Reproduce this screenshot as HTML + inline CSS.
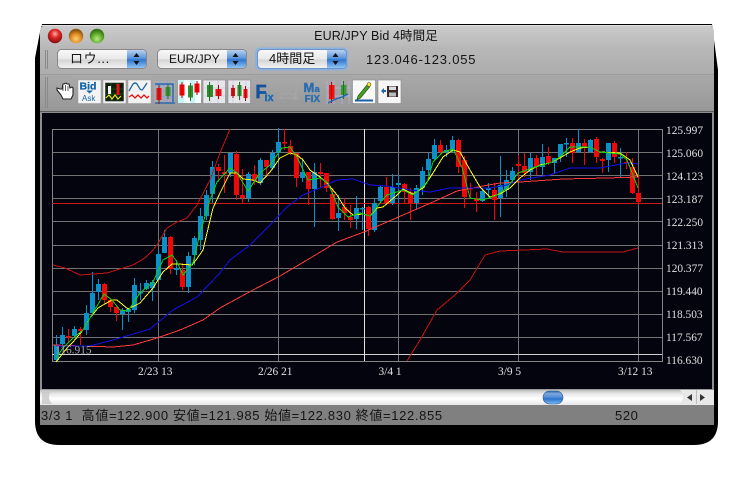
<!DOCTYPE html>
<html><head><meta charset="utf-8"><style>
html,body{margin:0;padding:0;background:#fff;width:754px;height:480px;overflow:hidden}
svg{position:absolute;left:0;top:0}
.t{font-family:"Liberation Sans","Noto Sans CJK JP",sans-serif;fill:#141414}
.s{font-family:"Liberation Serif",serif;font-size:11.4px;fill:#e0e0e0}
.b{font-family:"Liberation Sans",sans-serif;font-weight:bold}
</style></head><body>
<svg width="754" height="480" viewBox="0 0 754 480" xmlns="http://www.w3.org/2000/svg">
<defs>
<linearGradient id="win" x1="0" y1="0" x2="0" y2="1"><stop offset="0" stop-color="#cbcbcb"/><stop offset=".22" stop-color="#bcbcbc"/><stop offset=".25" stop-color="#b8b8b8"/><stop offset=".57" stop-color="#adadad"/><stop offset=".58" stop-color="#a9a9a9"/><stop offset="1" stop-color="#979797"/></linearGradient>
<linearGradient id="pop" x1="0" y1="0" x2="0" y2="1"><stop offset="0" stop-color="#fafafa"/><stop offset=".5" stop-color="#e8e8e8"/><stop offset=".55" stop-color="#d4d4d4"/><stop offset="1" stop-color="#f4f4f4"/></linearGradient>
<linearGradient id="blu" x1="0" y1="0" x2="0" y2="1"><stop offset="0" stop-color="#b8d0f0"/><stop offset=".45" stop-color="#5d97dc"/><stop offset=".55" stop-color="#2f74cf"/><stop offset="1" stop-color="#8fc4f4"/></linearGradient>
<linearGradient id="trk" x1="0" y1="0" x2="0" y2="1"><stop offset="0" stop-color="#b4b4b4"/><stop offset=".3" stop-color="#e8e8e8"/><stop offset=".6" stop-color="#ffffff"/><stop offset="1" stop-color="#e6e6e6"/></linearGradient>
<linearGradient id="thb" x1="0" y1="0" x2="0" y2="1"><stop offset="0" stop-color="#2a5fa8"/><stop offset=".2" stop-color="#7fa8dc"/><stop offset=".5" stop-color="#4f8ad6"/><stop offset=".6" stop-color="#2a72cc"/><stop offset="1" stop-color="#7fbaf0"/></linearGradient>
<radialGradient id="rd" cx=".5" cy=".35" r=".6"><stop offset="0" stop-color="#ffb0a8"/><stop offset=".45" stop-color="#e02a28"/><stop offset="1" stop-color="#8c1010"/></radialGradient>
<radialGradient id="yl" cx=".5" cy=".7" r=".6"><stop offset="0" stop-color="#ffd078"/><stop offset=".6" stop-color="#e08a20"/><stop offset="1" stop-color="#8c5810"/></radialGradient>
<radialGradient id="gn" cx=".5" cy=".7" r=".6"><stop offset="0" stop-color="#b8e888"/><stop offset=".6" stop-color="#62ae2c"/><stop offset="1" stop-color="#3a7414"/></radialGradient>
</defs>

<!-- shadow + window -->
<path d="M42 24H712L714 40L718 70V421Q718 445 694 445H59Q35 445 35 421V58L40 32Z" fill="#000"/>
<path d="M40 32Q40 25 47 25H707Q714 25 714 32V112H40Z" fill="url(#win)"/>
<rect x="41" y="25" width="672" height="1" fill="#e2e2e2"/>
<rect x="40" y="74" width="674" height="1" fill="#9c9c9c"/>
<rect x="40" y="111" width="674" height="1.500" fill="#5a5a5a"/>
<rect x="40" y="112" width="674" height="278" fill="#8e8e8e"/>
<rect x="42" y="113" width="670" height="276" fill="#04040f"/>

<!-- traffic lights -->
<circle cx="55" cy="36" r="7.200" fill="url(#rd)"/><circle cx="76" cy="36" r="7.200" fill="url(#yl)"/><circle cx="97" cy="36" r="7.200" fill="url(#gn)"/>
<text class="t" x="376" y="40" font-size="12.500" letter-spacing=".1" text-anchor="middle">EUR/JPY Bid 4時間足</text>

<!-- grips -->
<path d="M45.500 50V69M47.500 50V69M45.500 77V108M47.500 77V108" stroke="#8a8a8a" stroke-width="1" fill="none"/>

<!-- popups -->
<g>
<rect x="57.500" y="49.500" width="89" height="19" rx="4" fill="url(#pop)" stroke="#888"/>
<path d="M127 50H142Q146 50 146 54V64Q146 68 142 68H127Z" fill="url(#blu)"/>
<path d="M136.500 53l-3 4h6zM136.500 65l-3-4h6z" fill="#111"/>
<text class="t" x="70" y="63" font-size="13" letter-spacing=".6">ロウ...</text>
<rect x="157.500" y="49.500" width="89" height="19" rx="4" fill="url(#pop)" stroke="#888"/>
<path d="M227 50H242Q246 50 246 54V64Q246 68 242 68H227Z" fill="url(#blu)"/>
<path d="M235.500 53l-3 4h6zM235.500 65l-3-4h6z" fill="#111"/>
<text class="t" x="169" y="63" font-size="12">EUR/JPY</text>
<rect x="255" y="47.500" width="93" height="23" rx="5" fill="#7fb0ea" opacity=".8"/>
<rect x="257.500" y="49.500" width="89" height="19" rx="4" fill="url(#pop)" stroke="#6f93c4"/>
<path d="M327 50H342Q346 50 346 54V64Q346 68 342 68H327Z" fill="url(#blu)"/>
<path d="M335.500 53l-3 4h6zM335.500 65l-3-4h6z" fill="#111"/>
<text class="t" x="269" y="63" font-size="13">4時間足</text>
</g>
<text class="t" x="366" y="64" font-size="13" letter-spacing=".8">123.046-123.055</text>

<!-- toolbar icons -->
<path d="M57 90l4 5 2 4h8l2-4v-7l-1-1-2 1-1-4-2 0-1-1-2 1-1 0-1 5-2 0-3-1z" fill="#fff" stroke="#222" stroke-width="1.100"/>
<path d="M63 86v5M65.500 85v6M68 86v5" stroke="#222" stroke-width=".7"/>
<!-- Bid/Ask -->
<rect x="78" y="80" width="23" height="23.500" fill="#f4f4f4" stroke="#999" stroke-width=".5"/>
<text class="b" x="79.500" y="89.500" font-size="10.500" fill="#1466a8" stroke="#1466a8" stroke-width=".3">Bid</text>
<path d="M86 90.500h7l-3.500 3z" fill="#1466a8"/>
<text x="82" y="101" font-family="Liberation Sans,sans-serif" font-size="8" fill="#1466a8">Ask</text>
<!-- osc black -->
<rect x="103" y="80" width="23" height="23.500" fill="#f2f2f2" stroke="#999" stroke-width=".5"/>
<rect x="105.500" y="83" width="18" height="18" fill="#0a200a" stroke="#333" stroke-width=".6"/>
<path d="M105 89h18M105 94h18M111 83v18M117 83v18" stroke="#2a6a2a" stroke-width=".6"/>
<rect x="108" y="86" width="3" height="8" fill="#f0f0f0"/><rect x="116.500" y="84" width="3" height="11" fill="#e81010"/>
<path d="M106 98l3-3 3 4 3-4 3 4 3-3" stroke="#e8e020" stroke-width="1.200" fill="none"/>
<!-- lines -->
<rect x="128" y="80" width="23" height="23.500" fill="#f2f2f2" stroke="#999" stroke-width=".5"/>
<path d="M129 91l4-7q2-2 4 0l3 5q2 2 3 0l4-6" stroke="#1f66a8" stroke-width="1.300" fill="none"/>
<path d="M129 97l3-2 3 3 3-3 3 3 3-3 3 3 2-2" stroke="#e01010" stroke-width="1.300" fill="none"/>
<!-- candle grid blue -->
<rect x="154" y="81" width="21" height="22" fill="#aeb4c0" opacity=".5"/>
<path d="M155 85h19M155 91h19M155 97h19M160 81v22M167 81v22" stroke="#8e98e0" stroke-width=".7"/>
<path d="M155 84h18v18M155 103h20" stroke="#2a6ab0" stroke-width="1.500" fill="none"/>
<rect x="156.500" y="88" width="5" height="12" fill="#e81010"/><path d="M159 85v19" stroke="#a01010"/>
<rect x="165.500" y="87" width="5" height="9" fill="#3a9030"/><path d="M168 84v15" stroke="#2a7020"/>
<!-- candles cyan -->
<rect x="178" y="80" width="23" height="23" fill="#c8f4f8"/><rect x="184" y="80" width="6" height="23" fill="#f4ffff"/><rect x="195" y="80" width="6" height="23" fill="#f4ffff"/>
<rect x="179.500" y="84.500" width="5" height="11" fill="#f00"/><path d="M182 82v16" stroke="#b00"/>
<rect x="188" y="85.500" width="5" height="12" fill="#3a9030"/><path d="M190.500 83v18" stroke="#2a7020"/>
<rect x="194.500" y="83.500" width="5" height="9" fill="#f00"/><path d="M197 81v14" stroke="#b00"/>
<!-- candles btn 1 -->
<rect x="203" y="80" width="22.500" height="23.500" fill="#e6e6ea" stroke="#8a8a8a" stroke-width=".6"/>
<path d="M204 88h21M204 96h21M210 81v22M218 81v22" stroke="#b9bce6" stroke-width=".6"/>
<rect x="207" y="85" width="6" height="12" fill="#2f8a2c"/><path d="M209.500 82v19" stroke="#2a7020"/>
<rect x="215.500" y="89" width="6" height="7" fill="#e81010"/><path d="M218.500 85v14" stroke="#b00"/>
<!-- candles btn 2 -->
<rect x="228" y="80" width="22.500" height="23.500" fill="#e6e6ea" stroke="#8a8a8a" stroke-width=".6"/>
<path d="M229 88h21M229 96h21M233 81v22M240 81v22M246 81v22" stroke="#b9bce6" stroke-width=".6"/>
<rect x="231" y="88" width="4" height="8" fill="#c81818"/><path d="M233 85v13" stroke="#b00"/>
<rect x="237.500" y="85" width="4" height="11" fill="#2f8a2c"/><path d="M239.500 82v18" stroke="#2a7020"/>
<rect x="243.500" y="89" width="4" height="9" fill="#e81010"/><path d="M245.500 86v15" stroke="#b00"/>
<!-- Fix -->
<text class="b" x="255.500" y="98" font-size="18" fill="#16539c" stroke="#16539c" stroke-width=".7">F</text>
<text class="b" x="264.500" y="101" font-size="11" fill="#1a6ab0" stroke="#1a6ab0" stroke-width=".4">ix</text>
<!-- disabled -->
<path d="M280 97l3-4 3 2 3-3 3 3 3-2v5h-15z" fill="none" stroke="#a8a8a8"/>
<path d="M296 83v17M293.500 86l2.500-3 2.500 3M293.500 97l2.500 3 2.500-3" stroke="#a6a6a6" fill="none"/>
<!-- MA FIX -->
<text class="b" x="303.500" y="92" font-size="13" fill="#2a6cb0" stroke="#2a6cb0" stroke-width=".4">M</text>
<text class="b" x="314.500" y="92" font-size="9.500" fill="#2a6cb0" stroke="#2a6cb0" stroke-width=".3">a</text>
<text class="b" x="304.500" y="102" font-size="10" fill="#2a6cb0" stroke="#2a6cb0" stroke-width=".3">FIX</text>
<!-- candle MA -->
<path d="M327 81v23M334 81v23M342 81v23M349 81v23M327 88h23M327 96h23" stroke="#b5b5e8" stroke-width=".7"/>
<rect x="329" y="85" width="5.500" height="14" fill="#f01010"/><path d="M331.500 82v21" stroke="#c00"/>
<rect x="341" y="85" width="5.500" height="10" fill="#3c9a34"/><path d="M343.500 81v18" stroke="#2a7020"/>
<path d="M328 103l8-4 6-2 6-3" stroke="#1f66b0" stroke-width="1.400" fill="none"/>
<!-- pen -->
<rect x="352.500" y="80" width="23" height="23.500" fill="#f8f8f8" stroke="#8a8a8a" stroke-width=".6"/>
<path d="M358 96l9-11 2.500 2-9 11-3.500 1.500z" fill="#4aa024" stroke="#205010" stroke-width=".7"/>
<circle cx="369" cy="84.500" r="2" fill="#f4ea20" stroke="#333" stroke-width=".5"/>
<rect x="355" y="99.500" width="18" height="2" fill="#1c5ea8"/>
<!-- save -->
<rect x="378" y="80" width="23" height="23.500" fill="#f6f6f6" stroke="#8a8a8a" stroke-width=".6"/>
<path d="M381 91l3-3v6z" fill="#1f66b0"/><rect x="384" y="90" width="2" height="2" fill="#1f66b0"/>
<rect x="387" y="86" width="11" height="11" fill="#382828"/><rect x="389" y="86.500" width="7" height="3.500" fill="#ddd"/><rect x="389" y="92.500" width="7" height="4" fill="#bbb"/>

<!-- grid -->
<g fill="none" shape-rendering="crispEdges">
<path d="M52 152.500H662M52 175.500H662M52 198.500H662M52 221.500H662M52 245.500H662M52 268.500H662M52 291.500H662M52 314.500H662M52 337.500H662" stroke="#727272"/>
<path d="M158.500 129V361M278.500 129V361M398.500 129V361M518.500 129V361M638.500 129V361" stroke="#727272"/>
<rect x="52.500" y="129.500" width="610" height="232" stroke="#848484"/>
<path d="M52 354.500H662" stroke="#d0d0d0"/>
<path d="M364.500 129V361" stroke="#e4e4e4"/>
<path d="M52 203.500H662" stroke="#c81818"/>
</g>

<!-- candles -->
<g fill="none" shape-rendering="crispEdges">
<path stroke="#0d8fc8" stroke-width="1" d="M56.500 335V361M62.500 327V345M74.500 326V338M86.500 305V335M92.500 272V313M98.500 279V300M122.500 308V330M128.500 308V322M134.500 278V313M140.500 283V300M146.500 280V290M152.500 280V301M158.500 250V280M164.500 230V253M176.500 260V275M188.500 252V293M194.500 236V265M200.500 208V250M206.500 190V220M212.500 161V203M230.500 153V177M248.500 172V202M260.500 158V185M272.500 150V170M278.500 128V157M302.500 158V182M314.500 163V227M338.500 195V231M356.500 196V229M362.500 207V230M374.500 198V232M380.500 185V203M392.500 174V205M398.500 175V203M416.500 185V209M422.500 167V195M428.500 153V175M434.500 139V160M446.500 145V157M452.500 136V153M482.500 188V202M488.500 183V197M500.500 156V217M506.500 170V197M512.500 167V183M530.500 153V180M542.500 144V175M554.500 158V173M560.500 144V162M566.500 138V157M578.500 129V153M590.500 139V153M608.500 143V172M620.500 148V178"/>
<path stroke="#0d8fc8" stroke-width="5" d="M56.500 345V360M62.500 335V344M74.500 329V336M86.500 313V330M92.500 293V313M98.500 284V292M122.500 310V314M128.500 309V312M134.500 285V310M140.500 292V293.500M146.500 283V289M152.500 282V288M158.500 254V280M164.500 237V253M176.500 268V270M188.500 256V287M194.500 238V255M200.500 216V240M206.500 195V216M212.500 167V194M230.500 153V173M248.500 174V198M260.500 160V183M272.500 153V168M278.500 142V153M302.500 172V178M314.500 172V189M338.500 213V218M356.500 208V219M362.500 208V209.500M374.500 203V230M380.500 187V201M392.500 187V203M398.500 183V185M416.500 188V203M422.500 171V188M428.500 159V170M434.500 145V159M446.500 150V152M452.500 140V151M482.500 191V201M488.500 188V190M500.500 185V198M506.500 180V190M512.500 171V180M530.500 158V172M542.500 157V167M554.500 158V163M560.500 144V157M566.500 143V144.500M578.500 143V152M590.500 140V152M608.500 143V160M620.500 157V158.500"/>
<path stroke="#f00808" stroke-width="1" d="M68.500 329V342M80.500 327V345M104.500 283V303M110.500 298V312M116.500 305V321M170.500 236V274M182.500 263V290M218.500 164V182M224.500 155V193M236.500 151V200M242.500 169V203M254.500 165V185M266.500 160V177M284.500 129V150M290.500 140V155M296.500 153V187M308.500 172V205M320.500 163V188M326.500 173V192M332.500 188V220M344.500 198V220M350.500 205V228M368.500 206V236M386.500 177V205M404.500 183V203M410.500 188V220M440.500 140V154M458.500 139V173M464.500 156V208M470.500 183V198M476.500 192V212M494.500 183V220M518.500 155V180M524.500 153V177M536.500 155V175M548.500 147V165M572.500 138V163M584.500 139V165M596.500 137V163M602.500 158V173M614.500 141V163M626.500 152V169M632.500 158V194M638.500 175V205"/>
<path stroke="#f00808" stroke-width="5" d="M68.500 336V337.500M80.500 329V331M104.500 284V300M110.500 300V307M116.500 307V313M170.500 237V269M182.500 270V287M218.500 167V171M224.500 172V174M236.500 154V195M242.500 195V198M254.500 174V181M266.500 160V167M284.500 142V143.500M290.500 146V153M296.500 153V178M308.500 172V189M320.500 172V174M326.500 173V188M332.500 194V219M344.500 207V213M350.500 217V220M368.500 207V229M386.500 187V203M404.500 184V192M410.500 192V203M440.500 145V152M458.500 140V167M464.500 160V197M470.500 188V189.500M476.500 198V201M494.500 190V200M518.500 164V166M524.500 166V173M536.500 158V167M548.500 156V163M572.500 143V153M584.500 143V147M596.500 139V157M602.500 159V161M614.500 143V157M626.500 162V163.500M632.500 167V193M638.500 193V202"/>
</g>

<!-- moving averages -->
<g fill="none" stroke-width="1" stroke-linejoin="round" shape-rendering="crispEdges">
<polyline stroke="#c81212" points="53,265 65,268 80,275 107,273 133,265 145,258 153,250 157,245 167,228 177,222 187,218 197,205 210,180 220,153 230,129"/>
<polyline stroke="#c81212" points="407,361 420,340 437,310 455,295 470,280 485,255 500,251 547,249 563,252 623,252 638,248"/>
<polyline stroke="#ff3a3a" points="53,345 113,347 133,345 157,338 180,330 203,320 220,308 253,290 280,276 307,260 337,242 364,232 403,215 433,202 457,191 483,186 500,183 520,182 563,179 607,178 638,177"/>
<polyline stroke="#1010e8" points="56,346 90,346 113,340 150,329 173,310 197,297 220,273 230,260 250,245 270,225 287,207 303,195 320,188 337,180 353,179 370,185 387,186 410,190 430,192 450,188 490,188 507,185 520,180 550,175 570,168 600,168 627,163 638,164"/>
<polyline stroke="#ffff14" points="56,362 67,348 73,342 83,330 90,318 98,308 103,305 112,300 117,300 128,309 140,303 153,288 163,272 172,264 178,264 192,265 196,260 203,250 207,233 213,208 220,193 230,173 237,173 243,179 253,180 260,183 270,172 280,158 290,153 297,155 303,160 310,170 320,177 327,183 337,195 345,208 353,215 363,214 370,216 377,208 383,207 397,195 403,189 413,194 423,188 433,173 443,157 453,150 460,152 470,170 480,187 490,197 500,194 510,188 520,178 530,170 540,165 550,163 560,158 570,152 580,148 590,147 600,152 620,153 630,160 638,177"/>
<polyline stroke="#10d010" points="56,358 63,348 73,338 83,330 93,313 104,294 112,300 120,310 128,311 140,293 153,282 163,260 172,255 177,262 183,275 193,263 200,233 210,200 217,182 230,168 237,173 248,191 260,173 270,165 282,148 290,147 297,157 308,180 320,178 328,183 338,207 348,217 360,213 370,216 380,203 387,195 403,190 413,195 427,183 433,162 443,152 453,149 462,167 470,198 483,200 497,195 507,188 518,173 527,170 535,167 550,163 560,157 570,147 590,147 600,152 620,154 627,160 638,188"/>
</g>

<!-- labels -->
<text class="s" x="666" y="134">125.997</text>
<text class="s" x="666" y="157">125.060</text>
<text class="s" x="666" y="180">124.123</text>
<text class="s" x="666" y="203">123.187</text>
<text class="s" x="666" y="226">122.250</text>
<text class="s" x="666" y="249">121.313</text>
<text class="s" x="666" y="272">120.377</text>
<text class="s" x="666" y="295">119.440</text>
<text class="s" x="666" y="318">118.503</text>
<text class="s" x="666" y="341">117.567</text>
<text class="s" x="666" y="364">116.630</text>
<text class="s" x="138" y="375">2/23 13</text>
<text class="s" x="258" y="375">2/26 21</text>
<text class="s" x="378.500" y="375">3/4 1</text>
<text class="s" x="498" y="375">3/9 5</text>
<text class="s" x="618" y="375">3/12 13</text>
<text class="s" x="55" y="353.500" style="fill:#a8a8a8">116.915</text>

<!-- scrollbar -->
<rect x="40" y="389" width="674" height="16" fill="url(#trk)"/>
<rect x="40" y="389" width="674" height="1" fill="#9a9a9a"/>
<path d="M46 390Q47 390 52 390Q46 397 52 404H42V390Z" fill="#c8c8c8" opacity=".8"/>
<path d="M680 390Q686 397 680 404H714V390Z" fill="#e8e8e8"/>
<path d="M696.500 390V404" stroke="#bdbdbd"/>
<path d="M692 394v7l-5-3.500zM700 394v7l5-3.500z" fill="#333"/>
<rect x="543" y="391" width="20" height="13" rx="6.500" fill="url(#thb)" stroke="#2c5a98" stroke-width=".6"/>

<!-- status -->
<rect x="40" y="405" width="674" height="20" fill="#808080"/>
<text class="t" x="41" y="420" font-size="13" letter-spacing=".65" xml:space="preserve">3/3 1  高値=122.900 安値=121.985 始値=122.830 終値=122.855</text>
<text class="t" x="615" y="420" font-size="13" letter-spacing=".6">520</text>
</svg>
</body></html>
